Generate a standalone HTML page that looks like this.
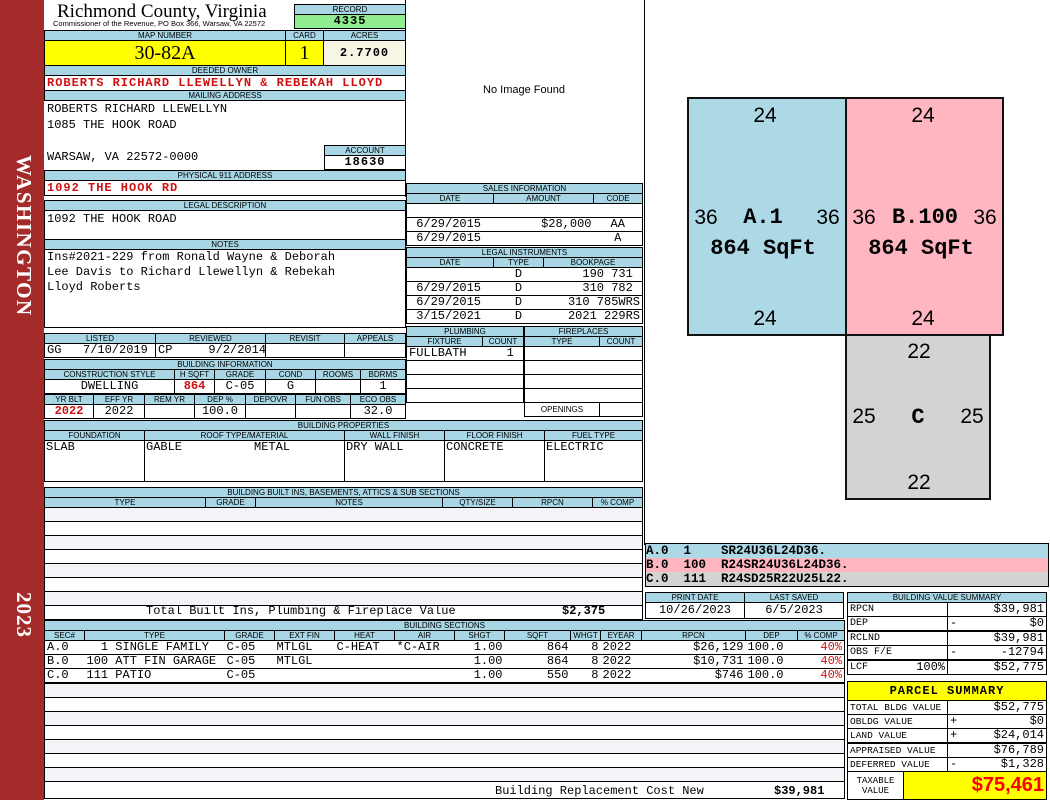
<!DOCTYPE html>
<html><head><meta charset="utf-8"><style>
*{margin:0;padding:0}
body{width:1050px;height:800px;position:relative;background:#fff;overflow:hidden;font-family:"Liberation Mono",monospace;font-size:12px;color:#000}
.a{position:absolute;box-sizing:border-box}
table{position:absolute;border-collapse:collapse;table-layout:fixed}
td{border:1px solid #000;padding:0 2px;white-space:nowrap;overflow:hidden;height:13px;line-height:13px;font-size:12px;font-family:"Liberation Mono",monospace;vertical-align:middle}
tr.h td,td.h{background:#a8d6e5;font:8px/9px "Liberation Sans",sans-serif;height:9px;text-align:center;padding:0}
.c{text-align:center}.r{text-align:right}
.red{color:#d01010;font-weight:bold}
.s td{background:#f3f3f8}
.nb td{border-left:none;border-right:none}
</style></head><body>
<!-- sidebar -->
<div class="a" style="left:0;top:0;width:44px;height:800px;background:#a52a2a"></div>
<div class="a" style="left:8px;top:155px;width:28px;height:180px;color:#fff;font:bold 21px 'Liberation Serif',serif;writing-mode:vertical-rl;letter-spacing:1.5px">WASHINGTON</div>
<div class="a" style="left:8px;top:592px;width:28px;height:60px;color:#fff;font:bold 21px 'Liberation Serif',serif;writing-mode:vertical-rl;letter-spacing:1px">2023</div>

<!-- header -->
<div class="a" style="left:44px;top:0;width:362px;height:197px;border-right:1px solid #000"></div>
<div class="a" style="left:57px;top:1px;font:19px 'Liberation Serif',serif;white-space:nowrap">Richmond County, Virginia</div>
<div class="a" style="left:53px;top:19px;font:7.5px 'Liberation Sans',sans-serif;white-space:nowrap">Commissioner of the Revenue, PO Box 366, Warsaw, VA 22572</div>
<table style="left:294px;top:4px;width:112px"><tr class="h"><td>RECORD</td></tr><tr><td class="c" style="background:#90ee90;font-weight:bold;letter-spacing:1px">4335</td></tr></table>
<table style="left:44px;top:30px;width:362px"><col style="width:241px"><col style="width:38px"><col>
<tr class="h"><td>MAP NUMBER</td><td>CARD</td><td>ACRES</td></tr>
<tr><td class="c" style="background:#ffff00;height:24px;font:20px 'Liberation Serif',serif">30-82A</td><td class="c" style="background:#ffff00;font:20px 'Liberation Serif',serif">1</td><td class="c" style="background:#f7f5e3;font-weight:bold;letter-spacing:1px">2.7700</td></tr>
<tr class="h"><td colspan="3">DEEDED OWNER</td></tr>
<tr><td colspan="3" class="red" style="letter-spacing:1px;height:14px">ROBERTS RICHARD LLEWELLYN &amp; REBEKAH LLOYD</td></tr>
<tr class="h"><td colspan="3">MAILING ADDRESS</td></tr>
</table>
<div class="a" style="left:47px;top:101px;line-height:16px;white-space:pre">ROBERTS RICHARD LLEWELLYN
1085 THE HOOK ROAD

WARSAW, VA 22572-0000</div>
<table style="left:324px;top:145px;width:82px"><tr class="h"><td>ACCOUNT</td></tr><tr><td class="c" style="font-weight:bold;letter-spacing:1px">18630</td></tr></table>
<table style="left:44px;top:170px;width:362px"><tr class="h"><td>PHYSICAL 911 ADDRESS</td></tr><tr><td class="red" style="letter-spacing:1px;height:14px">1092 THE HOOK RD</td></tr></table>
<table style="left:44px;top:200px;width:362px"><tr class="h"><td>LEGAL DESCRIPTION</td></tr><tr><td style="vertical-align:top;height:28px;line-height:16px">1092 THE HOOK ROAD</td></tr>
<tr class="h"><td>NOTES</td></tr><tr><td style="vertical-align:top;height:77px;line-height:15px;white-space:pre">Ins#2021-229 from Ronald Wayne &amp; Deborah
Lee Davis to Richard Llewellyn &amp; Rebekah
Lloyd Roberts</td></tr></table>

<table style="left:44px;top:333px;width:362px"><col style="width:111px"><col style="width:110px"><col style="width:79px"><col>
<tr class="h"><td>LISTED</td><td>REVIEWED</td><td>REVISIT</td><td>APPEALS</td></tr>
<tr><td>GG&nbsp;&nbsp;&nbsp;7/10/2019</td><td>CP&nbsp;&nbsp;&nbsp;&nbsp;&nbsp;9/2/2014</td><td></td><td></td></tr></table>
<table style="left:44px;top:359px;width:362px"><col style="width:130px"><col style="width:40px"><col style="width:51px"><col style="width:50px"><col style="width:45px"><col>
<tr class="h"><td colspan="6">BUILDING INFORMATION</td></tr>
<tr class="h"><td>CONSTRUCTION STYLE</td><td>H SQFT</td><td>GRADE</td><td>COND</td><td>ROOMS</td><td>BDRMS</td></tr>
<tr><td class="c">DWELLING</td><td class="c red">864</td><td class="c">C-05</td><td class="c">G</td><td></td><td class="c">1</td></tr></table>
<table style="left:44px;top:394px;width:362px"><col style="width:49px"><col style="width:51px"><col style="width:50px"><col style="width:51px"><col style="width:50px"><col style="width:55px"><col>
<tr class="h"><td>YR BLT</td><td>EFF YR</td><td>REM YR</td><td>DEP %</td><td>DEPOVR</td><td>FUN OBS</td><td>ECO OBS</td></tr>
<tr><td class="c red">2022</td><td class="c">2022</td><td></td><td class="c">100.0</td><td></td><td></td><td class="c">32.0</td></tr></table>

<!-- image area -->
<div class="a" style="left:405px;top:0;width:240px;height:182px;border-right:1px solid #000"></div>
<div class="a" style="left:405px;top:84px;width:238px;text-align:center;font:11px 'Liberation Sans',sans-serif">No Image Found</div>

<table style="left:406px;top:183px;width:237px"><col style="width:87px"><col style="width:100px"><col>
<tr class="h"><td colspan="3">SALES INFORMATION</td></tr>
<tr class="h"><td>DATE</td><td>AMOUNT</td><td>CODE</td></tr>
<tr class="nb"><td style="border-left:1px solid #000"></td><td></td><td style="border-right:1px solid #000"></td></tr>
<tr class="nb"><td style="border-left:1px solid #000">&nbsp;6/29/2015</td><td class="r">$28,000</td><td class="c" style="border-right:1px solid #000">AA</td></tr>
<tr class="nb"><td style="border-left:1px solid #000">&nbsp;6/29/2015</td><td></td><td class="c" style="border-right:1px solid #000">A</td></tr>
</table>
<table style="left:406px;top:247px;width:237px"><col style="width:87px"><col style="width:50px"><col>
<tr class="h"><td colspan="3">LEGAL INSTRUMENTS</td></tr>
<tr class="h"><td>DATE</td><td>TYPE</td><td>BOOKPAGE</td></tr>
<tr class="nb"><td style="border-left:1px solid #000"></td><td class="c">D</td><td class="r" style="border-right:1px solid #000">190 731&nbsp;</td></tr>
<tr class="nb"><td style="border-left:1px solid #000">&nbsp;6/29/2015</td><td class="c">D</td><td class="r" style="border-right:1px solid #000">310 782&nbsp;</td></tr>
<tr class="nb"><td style="border-left:1px solid #000">&nbsp;6/29/2015</td><td class="c">D</td><td class="r" style="border-right:1px solid #000">310 785WRS</td></tr>
<tr class="nb"><td style="border-left:1px solid #000">&nbsp;3/15/2021</td><td class="c">D</td><td class="r" style="border-right:1px solid #000">2021 229RS</td></tr>
</table>
<table style="left:406px;top:326px;width:118px"><col style="width:76px"><col>
<tr class="h"><td colspan="2">PLUMBING</td></tr>
<tr class="h"><td>FIXTURE</td><td>COUNT</td></tr>
<tr><td style="border-right:none">FULLBATH</td><td class="r" style="border-left:none">1&nbsp;</td></tr>
<tr><td colspan="2"></td></tr><tr><td colspan="2"></td></tr><tr><td colspan="2"></td></tr>
</table>
<table style="left:524px;top:326px;width:119px"><col style="width:75px"><col>
<tr class="h"><td colspan="2">FIREPLACES</td></tr>
<tr class="h"><td>TYPE</td><td>COUNT</td></tr>
<tr><td colspan="2"></td></tr><tr><td colspan="2"></td></tr><tr><td colspan="2"></td></tr><tr><td colspan="2"></td></tr>
<tr><td class="c" style="font:8px 'Liberation Sans',sans-serif">OPENINGS</td><td></td></tr>
</table>

<!-- building properties -->
<table style="left:44px;top:420px;width:599px"><col style="width:100px"><col style="width:200px"><col style="width:100px"><col style="width:100px"><col>
<tr class="h"><td colspan="5">BUILDING PROPERTIES</td></tr>
<tr class="h"><td>FOUNDATION</td><td>ROOF TYPE/MATERIAL</td><td>WALL FINISH</td><td>FLOOR FINISH</td><td>FUEL TYPE</td></tr>
<tr><td style="vertical-align:top;height:40px;padding:0 1px">SLAB</td><td style="vertical-align:top;padding:0 1px;white-space:pre">GABLE          METAL</td><td style="vertical-align:top;padding:0 1px">DRY WALL</td><td style="vertical-align:top;padding:0 1px">CONCRETE</td><td style="vertical-align:top;padding:0 1px">ELECTRIC</td></tr>
</table>

<!-- built ins -->
<table style="left:44px;top:487px;width:599px"><col style="width:161px"><col style="width:50px"><col style="width:187px"><col style="width:70px"><col style="width:80px"><col>
<tr class="h"><td colspan="6">BUILDING BUILT INS, BASEMENTS, ATTICS &amp; SUB SECTIONS</td></tr>
<tr class="h"><td>TYPE</td><td>GRADE</td><td>NOTES</td><td>QTY/SIZE</td><td>RPCN</td><td>% COMP</td></tr>
<tr class="s"><td colspan="6"></td></tr><tr><td colspan="6"></td></tr><tr class="s"><td colspan="6"></td></tr><tr><td colspan="6"></td></tr><tr class="s"><td colspan="6"></td></tr><tr><td colspan="6"></td></tr><tr class="s"><td colspan="6"></td></tr>
<tr><td colspan="6"></td></tr>
</table>
<div class="a" style="left:146px;top:604px;white-space:pre;line-height:14px">Total Built Ins, Plumbing &amp; Fireplace Value</div>
<div class="a" style="left:562px;top:604px;font-weight:bold;line-height:14px">$2,375</div>

<!-- building sections -->
<table style="left:44px;top:620px;width:801px"><col style="width:40px"><col style="width:140px"><col style="width:50px"><col style="width:60px"><col style="width:60px"><col style="width:60px"><col style="width:50px"><col style="width:66px"><col style="width:30px"><col style="width:41px"><col style="width:104px"><col style="width:52px"><col>
<tr class="h"><td colspan="13">BUILDING SECTIONS</td></tr>
<tr class="h"><td>SEC#</td><td>TYPE</td><td>GRADE</td><td>EXT FIN</td><td>HEAT</td><td>AIR</td><td>SHGT</td><td>SQFT</td><td>WHGT</td><td>EYEAR</td><td>RPCN</td><td>DEP</td><td>% COMP</td></tr>
<tr class="nb"><td style="border-left:1px solid #000">A.0</td><td>&nbsp;&nbsp;1 SINGLE FAMILY</td><td>C-05</td><td>MTLGL</td><td>C-HEAT</td><td>*C-AIR</td><td class="r">1.00</td><td class="r">864</td><td class="r">8</td><td>2022</td><td class="r">$26,129</td><td>100.0</td><td class="r" style="color:#d01010;border-right:1px solid #000">40%</td></tr>
<tr class="nb"><td style="border-left:1px solid #000">B.0</td><td>100 ATT FIN GARAGE</td><td>C-05</td><td>MTLGL</td><td></td><td></td><td class="r">1.00</td><td class="r">864</td><td class="r">8</td><td>2022</td><td class="r">$10,731</td><td>100.0</td><td class="r" style="color:#d01010;border-right:1px solid #000">40%</td></tr>
<tr class="nb"><td style="border-left:1px solid #000">C.0</td><td>111 PATIO</td><td>C-05</td><td></td><td></td><td></td><td class="r">1.00</td><td class="r">550</td><td class="r">8</td><td>2022</td><td class="r">$746</td><td>100.0</td><td class="r" style="color:#d01010;border-right:1px solid #000">40%</td></tr>
</table>
<table style="left:44px;top:683px;width:801px">
<tr class="s"><td></td></tr><tr><td></td></tr><tr class="s"><td></td></tr><tr><td></td></tr><tr class="s"><td></td></tr><tr><td></td></tr><tr class="s"><td></td></tr>
<tr><td style="height:16px"></td></tr>
</table>
<div class="a" style="left:495px;top:784px;white-space:pre;line-height:14px">Building Replacement Cost New</div>
<div class="a" style="left:774px;top:784px;font-weight:bold;line-height:14px">$39,981</div>

<!-- sketch -->
<div class="a" style="left:644px;top:0;width:1px;height:545px;background:#000"></div>
<svg class="a" style="left:645px;top:0" width="405" height="545">
<rect x="43" y="98" width="158" height="237" fill="#add8e6" stroke="#111" stroke-width="2"/>
<rect x="201" y="98" width="157" height="237" fill="#ffb6c1" stroke="#111" stroke-width="2"/>
<rect x="201" y="335" width="144" height="164" fill="#d3d3d3" stroke="#111" stroke-width="2"/>
<g font-family="Liberation Sans" font-size="21" text-anchor="middle">
<text x="120" y="122">24</text><text x="120" y="325">24</text><text x="61" y="224">36</text><text x="183" y="224">36</text>
<text x="278" y="122">24</text><text x="278" y="325">24</text><text x="219" y="224">36</text><text x="340" y="224">36</text>
<text x="274" y="358">22</text><text x="274" y="489">22</text><text x="219" y="423">25</text><text x="327" y="423">25</text>
</g>
<g font-family="Liberation Mono" font-weight="bold" font-size="22" text-anchor="middle">
<text x="118" y="223">A.1</text><text x="118" y="254">864 SqFt</text>
<text x="280" y="223">B.100</text><text x="276" y="254">864 SqFt</text>
<text x="273" y="423">C</text>
</g>
</svg>
<div class="a" style="left:645px;top:543px;width:404px;height:44px;border:1px solid #000;font:bold 12.5px 'Liberation Mono',monospace;line-height:14px;white-space:pre"><div style="background:#add8e6">A.0  1    SR24U36L24D36.</div><div style="background:#ffb6c1">B.0  100  R24SR24U36L24D36.</div><div style="background:#d3d3d3">C.0  111  R24SD25R22U25L22.</div></div>

<table style="left:645px;top:592px;width:199px"><col style="width:99px"><col>
<tr class="h"><td>PRINT DATE</td><td>LAST SAVED</td></tr>
<tr><td class="c" style="height:15px">10/26/2023</td><td class="c">6/5/2023</td></tr></table>

<table style="left:847px;top:592px;width:200px"><col style="width:100px"><col style="width:16px"><col>
<tr class="h"><td colspan="3">BUILDING VALUE SUMMARY</td></tr>
<tr><td style="font-size:10px">RPCN</td><td colspan="2" class="r">$39,981</td></tr>
<tr><td style="font-size:10px">DEP</td><td style="border-right:none">-</td><td class="r" style="border-left:none">$0</td></tr>
<tr><td style="font-size:10px;border-top:2px solid #000">RCLND</td><td colspan="2" class="r" style="border-top:2px solid #000">$39,981</td></tr>
<tr><td style="font-size:10px">OBS F/E</td><td style="border-right:none">-</td><td class="r" style="border-left:none">-12794</td></tr>
<tr><td style="font-size:10px;border-top:2px solid #000">LCF<span style="float:right;font-size:12px">100%</span></td><td colspan="2" class="r" style="border-top:2px solid #000">$52,775</td></tr>
</table>

<table style="left:847px;top:681px;width:200px"><col style="width:100px"><col style="width:16px"><col>
<tr><td colspan="3" class="c" style="background:#ffff00;height:18px;font:bold 12px 'Liberation Mono',monospace;letter-spacing:1px">PARCEL SUMMARY</td></tr>
<tr><td style="font-size:9.5px">TOTAL BLDG VALUE</td><td colspan="2" class="r">$52,775</td></tr>
<tr><td style="font-size:9.5px">OBLDG VALUE</td><td style="border-right:none">+</td><td class="r" style="border-left:none">$0</td></tr>
<tr><td style="font-size:9.5px">LAND VALUE</td><td style="border-right:none">+</td><td class="r" style="border-left:none">$24,014</td></tr>
<tr><td style="font-size:9.5px;border-top:2px solid #000">APPRAISED VALUE</td><td colspan="2" class="r" style="border-top:2px solid #000">$76,789</td></tr>
<tr><td style="font-size:9.5px">DEFERRED VALUE</td><td style="border-right:none">-</td><td class="r" style="border-left:none">$1,328</td></tr>
</table>
<table style="left:847px;top:771px;width:200px"><col style="width:56px"><col>
<tr><td class="c" style="font-size:9px;line-height:10px;height:27px;white-space:normal">TAXABLE VALUE</td><td class="r" style="background:#ffff00;color:#ff0000;font:bold 20px 'Liberation Sans',sans-serif">$75,461</td></tr></table>
</body></html>
